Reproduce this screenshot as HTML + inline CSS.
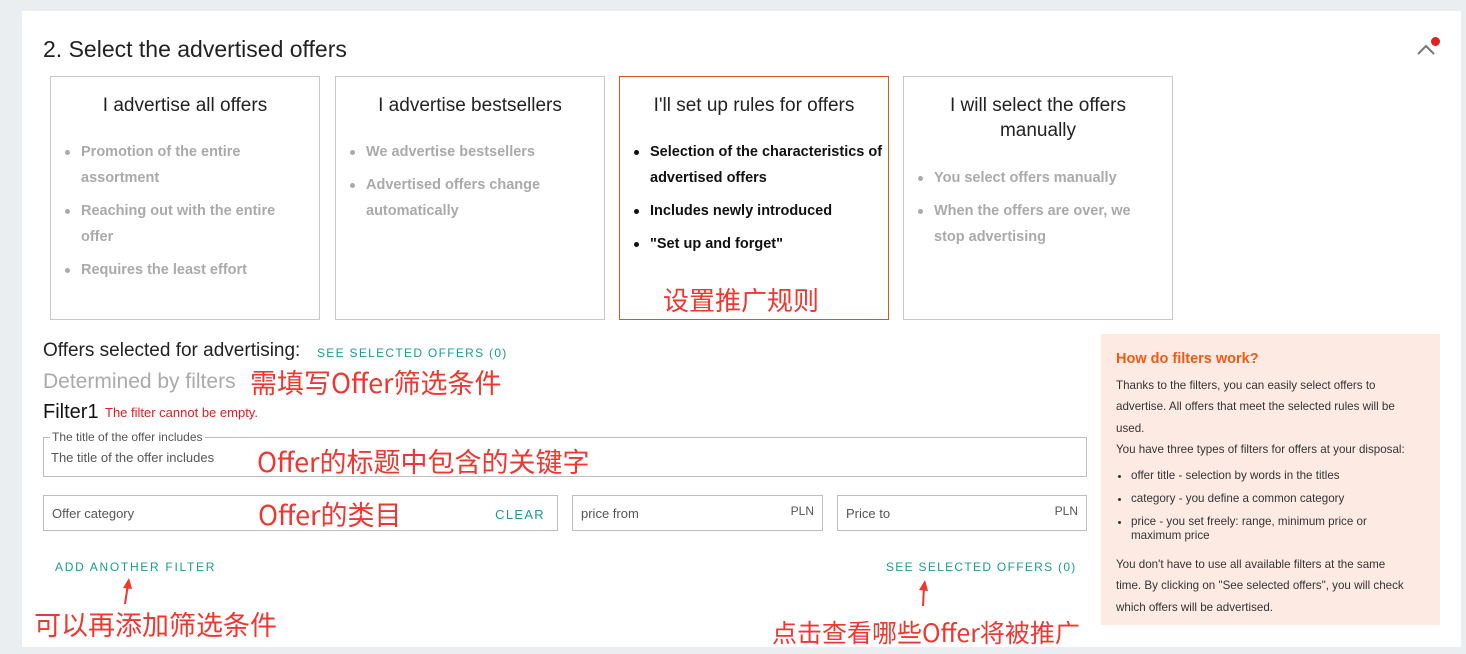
<!DOCTYPE html>
<html><head><meta charset="utf-8"><style>
*{margin:0;padding:0;box-sizing:border-box}
body{width:1466px;height:654px;background:#ebeef1;position:relative;overflow:hidden;font-family:"Liberation Sans","Noto Sans CJK SC",sans-serif}
.p{position:absolute;left:22px;top:11px;width:1439px;height:636px;background:#fff}
.a{position:absolute;white-space:nowrap}
.card{position:absolute;top:76px;width:270px;height:244px;border:1px solid #c8c8c8;background:#fff}
.card h3{font-weight:normal;font-size:19px;color:#222;text-align:center;margin-top:16px;line-height:25px}
.card ul{margin:21px 0 0 30px;font-size:14.5px;font-weight:bold;color:#aaa;line-height:26px;list-style:none}
.card li{position:relative;margin-bottom:7px;width:220px}
.card li:before{content:"";position:absolute;left:-16px;top:11px;width:5px;height:5px;border-radius:50%;background:#aaa}
.card.on{border-color:#e0521e}
.card.on ul{color:#111}.card.on li:before{background:#111}
.red{color:#f0362f;font-family:"Noto Sans CJK SC",sans-serif}
.in{position:absolute;border:1px solid #bdbdbd;height:36px;font-size:13px;color:#555}
.teal{color:#1a9c8c;letter-spacing:1.3px;font-size:12px}
.help{position:absolute;left:1101px;top:334px;width:339px;height:291px;background:#fdebe3;padding:17px 15px;font-size:11.6px;color:#333}
.help p{line-height:21.3px}
</style></head><body>
<div class="p"></div>
<div class="a" style="left:43px;top:36px;font-size:23px;color:#222">2. Select the advertised offers</div>
<svg class="a" style="left:1416px;top:42px" width="20" height="14"><path d="M2 12 L10 4 L18 12" stroke="#777" stroke-width="2" fill="none"/></svg>
<div class="a" style="left:1431px;top:37px;width:9px;height:9px;border-radius:50%;background:#e41f1f"></div>

<div class="card" style="left:50px"><h3>I advertise all offers</h3><ul><li>Promotion of the entire assortment</li><li>Reaching out with the entire offer</li><li>Requires the least effort</li></ul></div>
<div class="card" style="left:335px"><h3>I advertise bestsellers</h3><ul><li>We advertise bestsellers</li><li style="width:200px">Advertised offers change automatically</li></ul></div>
<div class="card on" style="left:619px"><h3>I'll set up rules for offers</h3><ul><li style="width:235px">Selection of the characteristics of advertised offers</li><li style="width:235px">Includes newly introduced</li><li>"Set up and forget"</li></ul>
<div class="a red" style="left:43px;top:204px;font-size:26px">设置推广规则</div></div>
<div class="card" style="left:903px"><h3>I will select the offers<br>manually</h3><ul style="margin-top:22px"><li>You select offers manually</li><li>When the offers are over, we stop advertising</li></ul></div>

<div class="a" style="left:43px;top:340px;font-size:19px;color:#222">Offers selected for advertising:</div>
<div class="a teal" style="left:317px;top:346px">SEE SELECTED OFFERS (0)</div>
<div class="a" style="left:43px;top:370px;font-size:21px;color:#aaa">Determined by filters</div>
<div class="a red" style="left:250px;top:362px;font-size:27px">需填写Offer筛选条件</div>
<div class="a" style="left:43px;top:401px;font-size:20px;color:#111">Filter1</div>
<div class="a" style="left:105px;top:405px;font-size:13px;color:#e02020">The filter cannot be empty.</div>

<div class="in" style="left:43px;top:437px;width:1044px;height:40px"><span class="a" style="left:6px;top:-8px;background:#fff;padding:0 2px;font-size:12px">The title of the offer includes</span><span class="a" style="left:7px;top:12px">The title of the offer includes</span></div>
<div class="a red" style="left:257px;top:441px;font-size:27px">Offer的标题中包含的关键字</div>

<div class="in" style="left:43px;top:495px;width:515px"><span class="a" style="left:8px;top:10px">Offer category</span><span class="a teal" style="right:12px;top:11px;font-size:13px">CLEAR</span></div>
<div class="a red" style="left:258px;top:494px;font-size:27px">Offer的类目</div>
<div class="in" style="left:572px;top:495px;width:251px"><span class="a" style="left:8px;top:10px">price from</span><span class="a" style="right:8px;top:8px;font-size:12px">PLN</span></div>
<div class="in" style="left:837px;top:495px;width:250px"><span class="a" style="left:8px;top:10px">Price to</span><span class="a" style="right:8px;top:8px;font-size:12px">PLN</span></div>

<div class="a teal" style="left:55px;top:560px;letter-spacing:1.7px">ADD ANOTHER FILTER</div>
<div class="a teal" style="left:886px;top:560px">SEE SELECTED OFFERS (0)</div>
<svg class="a" style="left:120px;top:578px" width="16" height="28"><path d="M5 26 L8 6" stroke="#f0362f" stroke-width="2"/><path d="M3 10 L9 0 L12 11Z" fill="#f0362f"/></svg>
<svg class="a" style="left:916px;top:580px" width="16" height="28"><path d="M7 26 L8 6" stroke="#f0362f" stroke-width="2"/><path d="M3 10 L9 0 L12 11Z" fill="#f0362f"/></svg>
<div class="a red" style="left:34px;top:604px;font-size:27px">可以再添加筛选条件</div>
<div class="a red" style="left:772px;top:614px;font-size:25px">点击查看哪些Offer将被推广</div>

<div class="help">
<div style="color:#f05a14;font-weight:bold;font-size:14.5px;margin-bottom:8px">How do filters work?</div>
<p>Thanks to the filters, you can easily select offers to<br>advertise. All offers that meet the selected rules will be<br>used.<br>You have three types of filters for offers at your disposal:</p>
<ul style="margin:9px 0 11px 15px;line-height:14px"><li style="margin-bottom:9px">offer title - selection by words in the titles</li><li style="margin-bottom:9px">category - you define a common category</li><li>price - you set freely: range, minimum price or<br>maximum price</li></ul>
<p>You don't have to use all available filters at the same<br>time. By clicking on "See selected offers", you will check<br>which offers will be advertised.</p></div>
</body></html>
